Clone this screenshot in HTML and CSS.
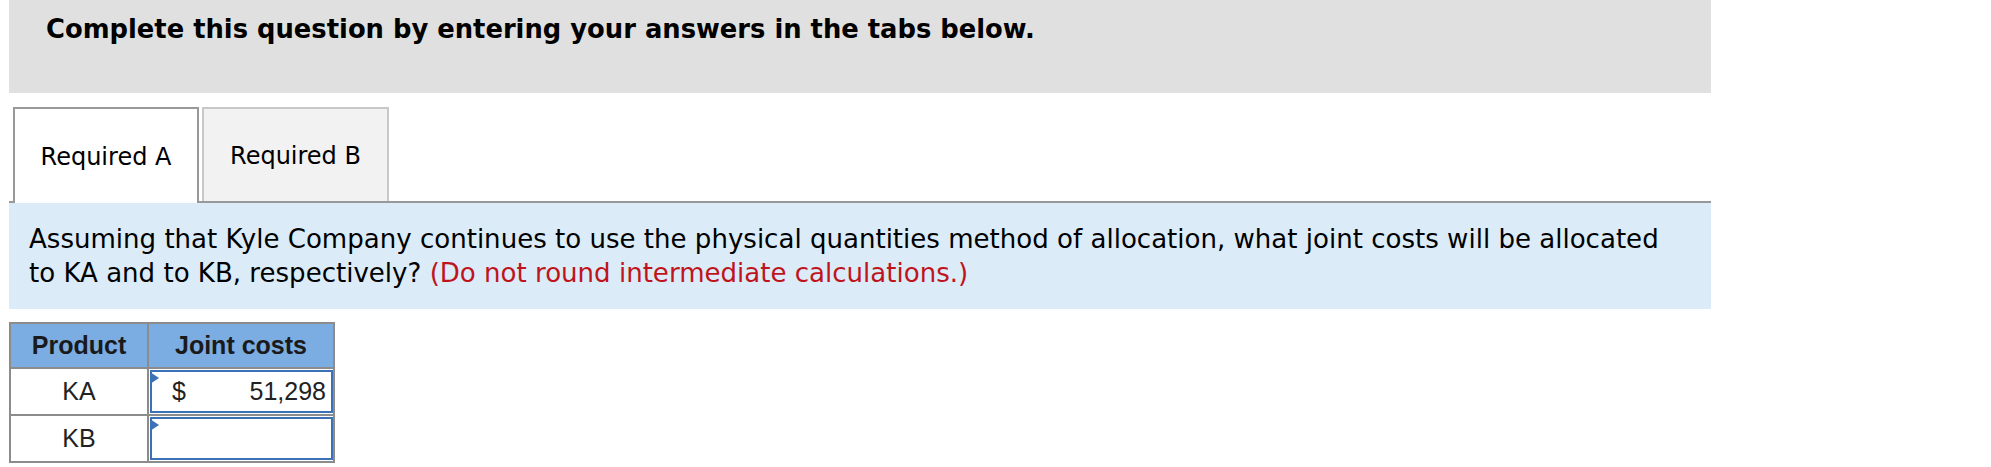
FILE: index.html
```html
<!DOCTYPE html>
<html>
<head>
<meta charset="utf-8">
<link rel="stylesheet" href="styles.css">
</head>
<body>
<div class="page">
  <div class="header">
    <h2 class="title">Complete this question by entering your answers in the tabs below.</h2>
  </div>
  <div class="tabs">
    <div class="tab active">Required A</div>
    <div class="tab">Required B</div>
  </div>
  <div class="prompt">
    <p class="question">Assuming that Kyle Company continues to use the physical quantities method of allocation, what joint costs will be allocated to KA and to KB, respectively? <span class="note">(Do not round intermediate calculations.)</span></p>
  </div>
  <table class="grid">
    <thead>
      <tr><th class="c1">Product</th><th class="c2">Joint costs</th></tr>
    </thead>
    <tbody>
      <tr>
        <td class="c1">KA</td>
        <td class="c2 cell"><div class="input"><span class="mark"></span><span class="cur">$</span><span class="val">51,298</span></div></td>
      </tr>
      <tr>
        <td class="c1">KB</td>
        <td class="c2 cell"><div class="input"><span class="mark"></span></div></td>
      </tr>
    </tbody>
  </table>
</div>
</body>
</html>
```

FILE: styles.css
```css
html, body {
  margin: 0;
  padding: 0;
  background: #fff;
}
.page {
  margin-left: 9px;
  width: 1702px;
  font-family: "DejaVu Sans", Verdana, sans-serif;
  color: #000;
}
.header {
  background: #e0e0e0;
  height: 93px;
  padding: 13px 0 0 37px;
  box-sizing: border-box;
}
.title {
  margin: 0;
  font-size: 25.8px;
  font-weight: bold;
  line-height: 32px;
}
.tabs {
  display: flex;
  gap: 3px;
  padding-left: 4px;
  margin-top: 14px;
  border-bottom: 2px solid #999;
  height: 96px;
  box-sizing: border-box;
}
.tab {
  width: 187px;
  box-sizing: border-box;
  border: 2px solid #c8c8c8;
  border-bottom: none;
  background: #f2f2f2;
  font-size: 24px;
  display: flex;
  align-items: center;
  justify-content: center;
  height: 94px;
  padding-top: 2px;
}
.tab.active {
  width: 186px;
  border-color: #999;
  background: #fff;
  height: 96px;
  margin-bottom: -2px;
}
.prompt {
  background: #dbebf8;
  padding: 19px 40px 19px 20px;
}
.question {
  margin: 0;
  font-size: 26.05px;
  line-height: 34px;
}
.note {
  color: #c0141c;
}
.grid {
  margin-top: 13px;
  border-collapse: collapse;
  font-family: "Liberation Sans", Arial, sans-serif;
  font-size: 25px;
}
.grid th, .grid td {
  border: 2px solid #8c8c8c;
  padding: 0;
  text-align: center;
}
.grid th {
  background: #7badE3;
  font-weight: bold;
  color: #1a1a1a;
  height: 43px;
}
.grid td {
  height: 44px;
  color: #222;
}
.c1 { width: 136px; }
.c2 { width: 183px; }
.grid td.cell {
  padding: 1px 0 0 1px;
  vertical-align: top;
}
.input {
  position: relative;
  height: 43px;
  box-sizing: border-box;
  border: 2px solid #3b72b7;
  display: flex;
  align-items: center;
  justify-content: space-between;
  padding: 0 5px 0 20px;
  background: #fff;
}
.mark {
  position: absolute;
  left: -2px;
  top: 0;
  width: 0;
  height: 0;
  border-top: 6px solid transparent;
  border-bottom: 6px solid transparent;
  border-left: 9px solid #3b72b7;
}
.cur, .val {
  color: #222;
}
```
